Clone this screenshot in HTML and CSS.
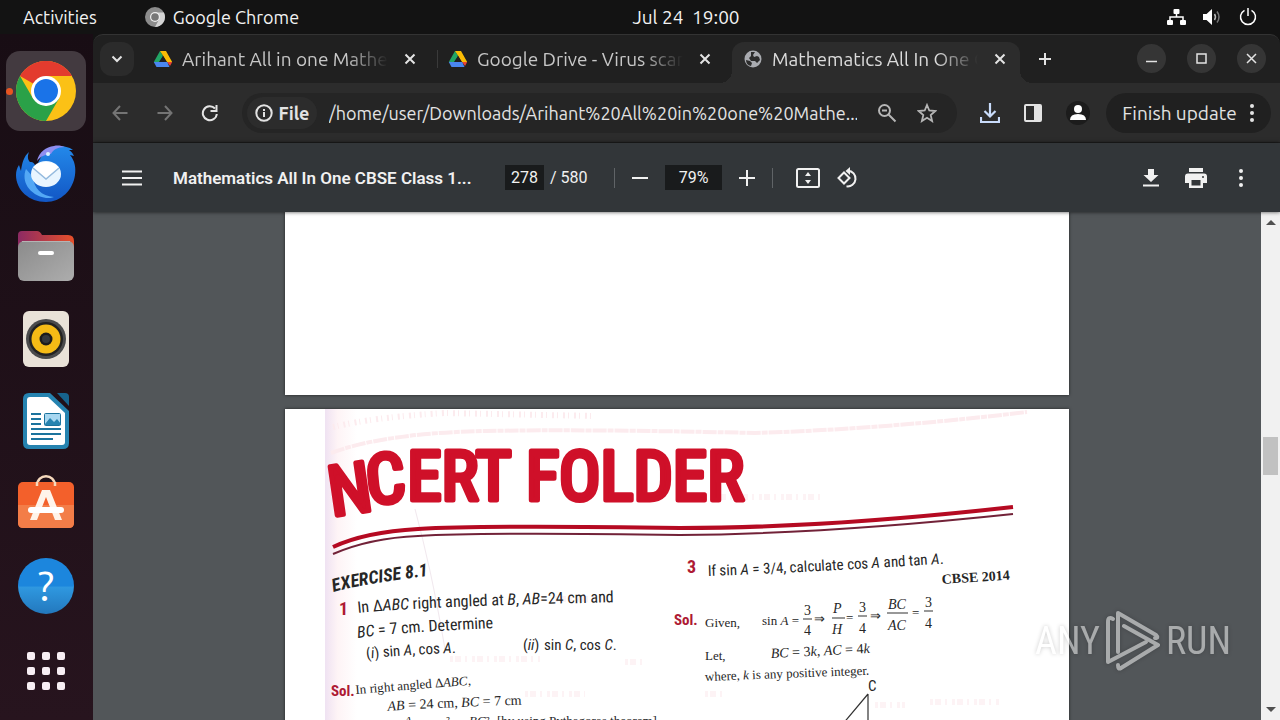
FILE: index.html
```html
<!DOCTYPE html>
<html lang="en">
<head>
    <meta charset="UTF-8">
    <meta name="viewport" content="width=device-width, initial-scale=1.0">
    <title>Mathematics All In One CBSE Class 10</title>
    <link rel="stylesheet" href="styles.css">
</head>
<body>
<!-- shared icons -->
<svg class="defs" width="0" height="0" aria-hidden="true">
    <symbol id="close" viewBox="0 0 16 16"><path d="M3.5 3.5l9 9M12.5 3.5l-9 9" fill="none" stroke="currentColor" stroke-width="2"/></symbol>
    <symbol id="drive" viewBox="0 0 20 18">
        <path d="M7 1h6l-3 5z" fill="#0b8043"/>
        <path d="M7 1l3 5-4 6H.8z" fill="#22a565"/>
        <path d="M7 1h6l6.200 11H14L10 5.500z" fill="#fbbc05"/>
        <path d="M14 12h5.200L17 16l-3-4z" fill="#ea4335"/>
        <path d="M3.500 17L.8 12h13.400l2.300 5z" fill="#4a86f0"/>
        <path d="M10 6l3.500 6h-7z" fill="#202020"/>
    </symbol>
    <symbol id="dots" viewBox="0 0 6 20"><g fill="currentColor"><circle cx="3" cy="3" r="2"/><circle cx="3" cy="10" r="2"/><circle cx="3" cy="17" r="2"/></g></symbol>
</svg>

<header class="topbar">
    <div class="topbar-left">
        <button type="button">Activities</button>
        <button type="button" class="app-menu">
            <svg width="20" height="20" viewBox="0 0 20 20"><circle cx="10" cy="10" r="10" fill="#8c8c8c"/><path d="M10 5.500h8.900A10 10 0 0 1 10 20l4-7.500z" fill="#d4d4d4"/><circle cx="10" cy="10" r="5" fill="#eee"/><circle cx="10" cy="10" r="3.800" fill="#777"/></svg>
            Google Chrome
        </button>
    </div>
    <button type="button" class="clock">Jul 24&nbsp; 19:00</button>
    <div class="tray">
        <svg width="19" height="18" viewBox="0 0 19 18"><g fill="#fff"><rect x="6.500" y="1" width="6" height="5" rx="1"/><rect x="0" y="12" width="6" height="5" rx="1"/><rect x="13" y="12" width="6" height="5" rx="1"/></g><path d="M9.500 5v4M3 12V9h13v3" fill="none" stroke="#fff" stroke-width="1.500"/></svg>
        <svg width="19" height="18" viewBox="0 0 19 18"><path d="M0 6h3.500L9 1v16l-5.500-5H0z" fill="#fff"/><path d="M11.500 6q2 3 0 6" fill="none" stroke="#bbb" stroke-width="1.500"/><path d="M14 3.500q4 5.500 0 11" fill="none" stroke="#777" stroke-width="1.500"/></svg>
        <svg width="18" height="18" viewBox="0 0 18 18"><path d="M5.500 2.300a7.500 7.500 0 1 0 7 0M9 0v8" fill="none" stroke="#fff" stroke-width="1.500"/></svg>
    </div>
</header>

<div class="desktop">
    <nav class="dock" aria-label="Dock">
        <div class="dock-apps">
            <button type="button" class="running" aria-label="Google Chrome">
                <svg width="60" height="60" viewBox="0 0 60 60"><circle cx="30" cy="30" r="30" fill="#fbc116"/><path d="M30 30L4 15a30 30 0 0 1 52 0H30z" fill="#e33b2e"/><path d="M4 15a30 30 0 0 0 26 45l13-22.500-13 7.500-13-7.500z" fill="#2aa148"/><path d="M30 15h26L43 37.500z" fill="#fbc116"/><circle cx="30" cy="30" r="15" fill="#fff"/><circle cx="30" cy="30" r="12" fill="#1a73e8"/></svg>
            </button>
            <button type="button" aria-label="Thunderbird">
                <svg width="60" height="60" viewBox="0 0 60 60"><defs><linearGradient id="bird" x1="0" y1="0" x2="0" y2="1"><stop offset="0" stop-color="#2389ea"/><stop offset="1" stop-color="#1256c4"/></linearGradient></defs>
                    <path d="M13 8c-2 5-1 8 1 10 5-1 6 5 6 9 2-14 11-24 23-25 5 0 10 1 14 4l-4 0c3 2 4 4 5 6l-4-1c5 6 6 13 5 20-2 15-14 27-29 27C13 58 0 46 0 31c0-4 1-7 3-10l2 6C6 19 8 12 13 8z" fill="url(#bird)"/>
                    <path d="M10 25c-5 12 3 26 20 29 3 0 6 0 8-1-13-1-20-9-21-20z" fill="#53a8f5"/><path d="M21 17C23 8 30 3 38 2c4-1 8 0 11 1-8 0-12 3-14 7-5 0-10 2-14 7z" fill="#8e8ef0"/><circle cx="32" cy="10" r="2" fill="#d9f1ff"/>
                    <ellipse cx="30" cy="30" rx="15" ry="13" fill="#e8f5ff"/><path d="M17 24l13 11 13-11c-5-8-21-8-26 0z" fill="#fff"/><path d="M17 24l13 11 13-11" fill="none" stroke="#94bade" stroke-width="1.500"/></svg>
            </button>
            <button type="button" aria-label="Files">
                <svg width="56" height="52" viewBox="0 0 56 52"><defs><linearGradient id="tab"><stop offset="0" stop-color="#8c2a63"/><stop offset="1" stop-color="#e8502a"/></linearGradient><linearGradient id="box" x1="0" y1="0" x2="1" y2="1"><stop offset="0" stop-color="#8b8b8b"/><stop offset="1" stop-color="#adadad"/></linearGradient></defs><path d="M0 20V5q0-4 4-4h15q3 0 5 4h26q6 0 6 6v12H0z" fill="url(#tab)"/><rect y="11" width="56" height="40" rx="6" fill="url(#box)"/><path d="M4 11.500h48" stroke="#b4b4b4"/><rect x="20" y="21" width="16" height="4" rx="2" fill="#fff"/></svg>
            </button>
            <button type="button" aria-label="Rhythmbox">
                <svg width="46" height="56" viewBox="0 0 46 56"><rect width="46" height="56" rx="6" fill="#e9e2d8"/><circle cx="23" cy="28" r="20" fill="#4a4b4c"/><circle cx="23" cy="28" r="17" fill="#222"/><circle cx="23" cy="28" r="14.500" fill="#f5bb16"/><circle cx="23" cy="28" r="6.500" fill="#1c1c1c"/><circle cx="23" cy="28" r="4" fill="#34383d"/></svg>
            </button>
            <button type="button" aria-label="LibreOffice Writer">
                <svg width="46" height="56" viewBox="0 0 46 56"><path d="M6 0h21l19 18v32q0 6-6 6H6q-6 0-6-6V6q0-6 6-6z" fill="#2583b0"/><path d="M34 0h8q4 0 4 4v9z" fill="#17638d"/><path d="M7 4h18l17 16v29q0 3-3 3H7q-3 0-3-3V7q0-3 3-3z" fill="#fff"/><path d="M8 21h10M8 26h10M8 31h10M8 36h30M8 41h30M8 46h22" stroke="#1b739d" stroke-width="2"/><rect x="21.500" y="20.500" width="16" height="12" rx="1" fill="#a8d7f0" stroke="#1b739d"/><path d="M22 31l5-6 4 4 3-3 4 5v1H22z" fill="#2583b0"/></svg>
            </button>
            <button type="button" aria-label="Ubuntu Software">
                <svg width="56" height="60" viewBox="0 0 56 60"><path d="M19 12c0-13 18-13 18 0" fill="none" stroke="#f6d9bd" stroke-width="2.500"/><rect y="8" width="56" height="46" rx="5" fill="#f3602b"/><path d="M0 31h56v18q0 5-5 5H5q-5 0-5-5z" fill="#f37d48"/><path d="M19 12V8M37 12V8" stroke="#f6d9bd" stroke-width="2.500"/><path d="M24 16h8l12 30h-7l-9-23-9 23h-7z" fill="#fff4ea"/><rect x="10" y="33" width="36" height="6" rx="3" fill="#fff"/></svg>
            </button>
            <button type="button" class="help" aria-label="Help"><span>?</span></button>
        </div>
        <button type="button" aria-label="Show Applications">
            <svg width="38" height="38" viewBox="0 0 38 38" fill="#f7eef3"><rect width="8" height="8" rx="2"/><rect x="15" width="8" height="8" rx="2"/><rect x="30" width="8" height="8" rx="2"/><rect y="15" width="8" height="8" rx="2"/><rect x="15" y="15" width="8" height="8" rx="2"/><rect x="30" y="15" width="8" height="8" rx="2"/><rect y="30" width="8" height="8" rx="2"/><rect x="15" y="30" width="8" height="8" rx="2"/><rect x="30" y="30" width="8" height="8" rx="2"/></svg>
        </button>
    </nav>

    <main class="window">
        <div class="tabstrip">
            <button type="button" class="tab-search" aria-label="Search tabs"><svg width="14" height="14" viewBox="0 0 14 14"><path d="M2.500 4.500L7 9l4.500-4.500" fill="none" stroke="currentColor" stroke-width="2"/></svg></button>
            <div class="tab">
                <svg width="20" height="18"><use href="#drive"/></svg>
                <span class="tab-title">Arihant All in one Mathe</span>
                <button type="button" aria-label="Close tab"><svg width="16" height="16"><use href="#close"/></svg></button>
            </div>
            <div class="tab divided">
                <svg width="20" height="18"><use href="#drive"/></svg>
                <span class="tab-title">Google Drive - Virus scan</span>
                <button type="button" aria-label="Close tab"><svg width="16" height="16"><use href="#close"/></svg></button>
            </div>
            <div class="tab active">
                <svg width="20" height="18" viewBox="0 0 20 18"><circle cx="10" cy="9" r="8.500" fill="#a9abb0"/><path d="M3 10l4 1 2 2-1 3q-5-1-5-6zM8 2l4 0-2 3 1 2 3-1 2 1 1 3-3 3-2-2-4 0-2-3 2-2z" fill="#2c2c2c"/></svg>
                <span class="tab-title">Mathematics All In One C</span>
                <button type="button" aria-label="Close tab"><svg width="16" height="16"><use href="#close"/></svg></button>
            </div>
            <button type="button" class="new-tab" aria-label="New tab"><svg width="14" height="14" viewBox="0 0 14 14"><path d="M7 1v12M1 7h12" stroke="currentColor" stroke-width="2"/></svg></button>
            <div class="window-buttons">
                <button type="button" aria-label="Minimize"><svg width="11" height="11" viewBox="0 0 11 11"><path d="M0 8.500h11" stroke="currentColor" stroke-width="1.500"/></svg></button>
                <button type="button" aria-label="Maximize"><svg width="11" height="11" viewBox="0 0 11 11"><rect x="1" y="1" width="9" height="9" fill="none" stroke="currentColor" stroke-width="1.500"/></svg></button>
                <button type="button" aria-label="Close"><svg width="11" height="11" viewBox="0 0 11 11"><path d="M1 1l9 9M10 1l-9 9" stroke="currentColor" stroke-width="1.500"/></svg></button>
            </div>
        </div>

        <div class="toolbar">
            <button type="button" class="nav-btn dim" aria-label="Back"><svg width="16" height="16" viewBox="0 0 16 16"><path d="M15.500 8H2M8 1L1.500 8 8 15" fill="none" stroke="currentColor" stroke-width="2"/></svg></button>
            <button type="button" class="nav-btn dim" aria-label="Forward"><svg width="16" height="16" viewBox="0 0 16 16"><path d="M.5 8H14M8 1l6.500 7L8 15" fill="none" stroke="currentColor" stroke-width="2"/></svg></button>
            <button type="button" class="nav-btn" aria-label="Reload"><svg width="18" height="18" viewBox="0 0 18 18"><path d="M14 4.500A7 7 0 1 0 15.800 10" fill="none" stroke="currentColor" stroke-width="2"/><path d="M16.500 1v7h-7V6h5V1z" fill="currentColor"/></svg></button>
            <div class="omnibox">
                <button type="button" class="chip">
                    <svg width="18" height="18" viewBox="0 0 18 18"><circle cx="9" cy="9" r="7.700" fill="none" stroke="currentColor" stroke-width="2"/><path d="M9 8v5M9 5v2" stroke="currentColor" stroke-width="2"/></svg>
                    File
                </button>
                <input type="text" aria-label="Address" value="/home/user/Downloads/Arihant%20All%20in%20one%20Mathe...">
                <button type="button" aria-label="Zoom"><svg width="20" height="20" viewBox="0 0 20 20"><g fill="none" stroke="currentColor" stroke-width="2"><circle cx="7.500" cy="7.500" r="5.500"/><path d="M11.500 11.500l7 7M5 7.500h5"/></g></svg></button>
                <button type="button" aria-label="Bookmark this tab"><svg width="20" height="20" viewBox="0 0 20 20"><path d="M10 2l2.300 5.500 6 .5-4.600 4 1.400 6L10 14.800 4.900 18l1.400-6-4.600-4 6-.5z" fill="none" stroke="currentColor" stroke-width="1.800"/></svg></button>
            </div>
            <div class="actions">
                <button type="button" class="downloads" aria-label="Downloads"><svg width="20" height="20" viewBox="0 0 20 20"><path d="M10 0v13M4.500 8l5.500 5.500L15.500 8M1 14v5h18v-5" fill="none" stroke="currentColor" stroke-width="2.200"/></svg></button>
                <button type="button" aria-label="Side panel"><svg width="18" height="18" viewBox="0 0 18 18"><rect x="1" y="1" width="16" height="16" rx="1" fill="none" stroke="currentColor" stroke-width="2"/><path d="M10 1h7v16h-7z" fill="currentColor"/></svg></button>
                <button type="button" class="profile" aria-label="Profile"><svg width="16" height="16" viewBox="0 0 16 16" fill="#fff"><circle cx="8" cy="4" r="4"/><path d="M0 15q0-6 8-6t8 6z"/></svg></button>
            </div>
            <button type="button" class="update">Finish update <svg width="6" height="20"><use href="#dots"/></svg></button>
        </div>

        <section class="pdf">
            <div class="pdf-bar">
                <button type="button" aria-label="Menu"><svg width="20" height="16" viewBox="0 0 20 16"><path d="M0 1.500h20M0 8h20M0 14.500h20" stroke="currentColor" stroke-width="2"/></svg></button>
                <h1>Mathematics All In One CBSE Class 1...</h1>
                <input class="page-no" type="text" aria-label="Page number" value="278">
                <span class="total">/ 580</span>
                <span class="sep"></span>
                <button type="button" aria-label="Zoom out"><svg width="16" height="16" viewBox="0 0 16 16"><path d="M0 8h16" stroke="currentColor" stroke-width="2"/></svg></button>
                <input class="zoom" type="text" aria-label="Zoom level" value="79%">
                <button type="button" aria-label="Zoom in"><svg width="16" height="16" viewBox="0 0 16 16"><path d="M0 8h16M8 0v16" stroke="currentColor" stroke-width="2"/></svg></button>
                <span class="sep"></span>
                <div class="view-buttons">
                    <button type="button" aria-label="Fit to page"><svg width="24" height="20" viewBox="0 0 24 20"><rect x="1" y="1" width="22" height="18" rx="1.500" fill="none" stroke="currentColor" stroke-width="2"/><path d="M12 4l3 4H9zM12 16l3-4H9z" fill="currentColor"/></svg></button>
                    <button type="button" aria-label="Rotate"><svg width="22" height="22" viewBox="0 0 22 22"><path d="M7 5.500L12.500 11 7 16.500 1.500 11z" fill="none" stroke="currentColor" stroke-width="2"/><path d="M11 3.800a7.800 7.800 0 1 1-1.500 15.500" fill="none" stroke="currentColor" stroke-width="2"/><path d="M13 0v8L8.500 4z" fill="currentColor"/></svg></button>
                </div>
                <div class="file-buttons">
                    <button type="button" aria-label="Download"><svg width="16" height="18" viewBox="0 0 16 18"><path d="M5 0h6v6h4.500L8 13 .5 6H5zM0 15.500h16v2H0z" fill="currentColor"/></svg></button>
                    <button type="button" aria-label="Print"><svg width="22" height="20" viewBox="0 0 22 20"><path d="M4 0h14v4H4zM3 5.500h16q3 0 3 3V15h-4v5H4v-5H0V8.500q0-3 3-3z" fill="currentColor"/><path d="M6.500 12h9v5.500h-9z" fill="#323639"/><circle cx="18" cy="9" r="1" fill="#323639"/></svg></button>
                    <button type="button" aria-label="More actions"><svg width="6" height="20"><use href="#dots"/></svg></button>
                </div>
            </div>

            <div class="viewer">
                <div class="pages">
                    <div class="sheet blank"></div>
                    <div class="sheet">
                        <!-- scanned book page, lines bend towards the spine -->
                        <svg class="scan" viewBox="0 0 784 1010" role="img" aria-label="NCERT Folder, Exercise 8.1">
                            <defs>
                                <linearGradient id="spine"><stop offset="0" stop-color="#efe2f2"/><stop offset=".4" stop-color="#fef4f6"/><stop offset="1" stop-color="#fff"/></linearGradient>
                                <path id="l-title" d="M47 107L88 101V95L130 91L560 91"/>
                                <path id="l-ex" d="M49 183Q80 173 220 158"/>
                                <path id="l-1" d="M73 204Q150 196 400 192"/>
                                <path id="l-2" d="M73 229Q140 219 400 213"/>
                                <path id="l-3" d="M82 250Q120 244 300 240"/>
                                <path id="l-4" d="M71 285Q130 280 300 267"/>
                                <path id="l-5" d="M103 302Q160 297 400 291"/>
                                <path id="r-1" d="M423 167Q540 163 760 148"/>
                                <path id="r-2" d="M657 175L780 167"/>
                                <path id="r-3" d="M486 249L680 239"/>
                                <path id="r-4" d="M420 272L680 262"/>
                            </defs>
                            <rect x="40" width="32" height="1010" fill="url(#spine)"/>
                            <g fill="none" stroke="#fcebee">
                                <path d="M46 44Q100 24 200 22T470 24Q600 20 742 3" stroke-width="4" stroke-dasharray="14 1 6 1"/>
                                <path d="M48 18Q90 8 160 4L310 7" stroke-width="6" stroke-dasharray="2 3 1 5"/>
                                <path d="M130 100Q138 130 145 162T160 240" stroke="#f1e8ee"/>
                                <path d="M165 250h90M270 190h50M340 253h20M240 285h60M420 285h18M590 296h30M645 293h70M430 88h110" stroke-width="6" stroke-dasharray="3 2 6 4 2 5" stroke="#fdf3f5"/>
                            </g>
                            <g fill="none">
                                <path d="M48 138Q80 123 133 120Q200 116 395 119Q540 119 728 98" stroke="#b50a22" stroke-width="4"/>
                                <path d="M48 145Q85 129 133 127Q200 123 395 126Q540 125 728 105" stroke="#722238" stroke-width="2"/>
                            </g>
                            <text class="title"><textPath href="#l-title">NCERT FOLDER</textPath></text>
                            <g class="sans">
                                <text class="exercise"><textPath href="#l-ex">EXERCISE 8.1</textPath></text>
                                <text class="num" x="54" y="206">1</text>
                                <text class="question"><textPath href="#l-1">In ∆<tspan class="i">ABC</tspan> right angled at <tspan class="i">B</tspan>, <tspan class="i">AB</tspan>=24 cm and</textPath></text>
                                <text class="question"><textPath href="#l-2"><tspan class="i">BC</tspan> = 7 cm. Determine</textPath></text>
                                <text><textPath href="#l-3">(<tspan class="i">i</tspan>) sin <tspan class="i">A</tspan>, cos <tspan class="i">A</tspan>.</textPath></text>
                                <text x="238" y="241">(<tspan class="i">ii</tspan>)</text>
                                <text x="259" y="241">sin <tspan class="i">C</tspan>, cos <tspan class="i">C</tspan>.</text>
                                <text class="num sol" x="46" y="287">Sol.</text>
                                <text class="num" x="402" y="164">3</text>
                                <text><textPath href="#r-1">If sin <tspan class="i">A</tspan> = 3/4, calculate cos <tspan class="i">A</tspan> and tan <tspan class="i">A</tspan>.</textPath></text>
                                <text class="num sol" x="389" y="216">Sol.</text>
                                <text x="583" y="282">C</text>
                            </g>
                            <g class="serif">
                                <text><textPath href="#l-4">In right angled ∆<tspan class="i">ABC</tspan>,</textPath></text>
                                <text class="eq"><textPath href="#l-5"><tspan class="i">AB</tspan> = 24 cm, <tspan class="i">BC</tspan> = 7 cm</textPath></text>
                                <text y="316"><tspan class="i" x="119">A</tspan><tspan x="161">²</tspan><tspan class="i" x="184">BC</tspan>²<tspan x="212">[by using Pythagoras theorem]</tspan></text>
                                <text class="eq b"><textPath href="#r-2">CBSE 2014</textPath></text>
                                <text x="420" y="218">Given,</text>
                                <text x="477" y="216">sin <tspan class="i">A</tspan> =</text>
                                <text class="eq" x="519" y="206">3</text><text class="eq" x="519" y="226">4</text>
                                <text x="529" y="214">⇒</text>
                                <text class="eq i" x="548" y="204">P</text><text class="eq i" x="547" y="225">H</text>
                                <text x="561" y="213">=</text>
                                <text class="eq" x="574" y="203">3</text><text class="eq" x="574" y="224">4</text>
                                <text x="585" y="211">⇒</text>
                                <text class="eq i" x="603" y="200">BC</text><text class="eq i" x="603" y="221">AC</text>
                                <text x="627" y="208">=</text>
                                <text class="eq" x="640" y="198">3</text><text class="eq" x="640" y="219">4</text>
                                <text x="420" y="251">Let,</text>
                                <text class="eq"><textPath href="#r-3"><tspan class="i">BC</tspan> = 3<tspan class="i">k</tspan>, <tspan class="i">AC</tspan> = 4<tspan class="i">k</tspan></textPath></text>
                                <text><textPath href="#r-4">where, <tspan class="i">k</tspan> is any positive integer.</textPath></text>
                            </g>
                            <path d="M518 210h9M547 209h13M573 207h9M602 204h21M639 202h9M583 285V360M583 285L520 360" fill="none" stroke="#333" stroke-width="1.200"/>
                        </svg>
                    </div>
                </div>
                <div class="scrollbar" aria-hidden="true">
                    <i class="up"></i>
                    <div class="thumb"></div>
                    <i class="down"></i>
                </div>
            </div>
        </section>
    </main>
</div>

<div class="watermark">
    <span>ANY</span>
    <svg width="54" height="62" viewBox="0 0 54 62"><g fill="none" stroke="currentColor" stroke-width="4" stroke-linejoin="round" stroke-linecap="round"><path d="M7 9Q2 6 2 12V52L40 32"/><path d="M12 42V3L50 25Q53 28 49 28"/><path d="M18 16L52 35L15 58Q12 60 12 55"/></g></svg>
    <span>RUN</span>
</div>
</body>
</html>
```

FILE: styles.css
```css
* {
    box-sizing: border-box;
}

body {
    margin: 0;
    height: 100vh;
    display: flex;
    flex-direction: column;
    overflow: hidden;
    background: #131313;
    color: #e3e3e3;
    font-family: "Ubuntu", "Noto Sans", "Open Sans", sans-serif;
    font-size: 18px;
}

button {
    display: flex;
    align-items: center;
    justify-content: center;
    padding: 0;
    border: none;
    background: none;
    color: inherit;
    font: inherit;
    white-space: nowrap;
}

input {
    border: none;
    color: inherit;
    font: inherit;
}

svg {
    display: block;
    flex: none;
}

.defs {
    position: absolute;
}

/* top bar */
.topbar {
    display: grid;
    grid-template-columns: 1fr auto 1fr;
    align-items: center;
    height: 34px;
    flex: none;
    padding: 0 23px 0 115px;
    color: #f2f2f2;
}

.topbar-left {
    display: flex;
    gap: 48px;
    margin-left: -92px;
}

.app-menu {
    gap: 8px;
}

.clock {
    font-size: 19px;
}

.tray {
    display: flex;
    justify-content: flex-end;
    gap: 17px;
}

/* dock */
.desktop {
    flex: 1;
    display: flex;
    min-height: 0;
}

.dock {
    width: 93px;
    flex: none;
    display: flex;
    flex-direction: column;
    gap: 5px;
    padding: 17px 6px 9px;
    background: linear-gradient(#180d14, #27141e);
}

.dock-apps {
    flex: 1;
    display: flex;
    flex-direction: column;
    justify-content: space-between;
}

.dock button {
    width: 80px;
    height: 80px;
    border-radius: 14px;
}

.dock .running {
    position: relative;
    background: #433a40;
}

.running::before {
    content: "";
    position: absolute;
    left: 0;
    width: 7px;
    height: 7px;
    border-radius: 50%;
    background: #e95420;
}

.help span {
    width: 56px;
    height: 56px;
    border-radius: 50%;
    background: linear-gradient(#1c86dd 50%, #2f98e0 52%, #2378bd);
    color: #fff;
    font-size: 42px;
    line-height: 56px;
}

/* browser window */
.window {
    flex: 1;
    min-width: 0;
    display: flex;
    flex-direction: column;
    background: #202020;
    border-top: 1px solid #333;
    border-radius: 10px 10px 0 0;
    overflow: hidden;
}

.tabstrip {
    display: flex;
    height: 48px;
    flex: none;
    padding: 7px 14px 0 7px;
}

.tab-search {
    width: 34px;
    height: 34px;
    margin-right: 8px;
    border-radius: 12px;
    background: #2b2b2b;
}

.tab {
    display: flex;
    align-items: center;
    gap: 9px;
    width: 295px;
    height: 34px;
    padding: 0 19px 0 11px;
}

.tab-title {
    flex: 1;
    overflow: hidden;
    white-space: nowrap;
    font-size: 19px;
    color: #c7c7c7;
    -webkit-mask-image: linear-gradient(90deg, #000 80%, transparent);
    mask-image: linear-gradient(90deg, #000 80%, transparent);
}

.tab button {
    margin-left: 5px;
}

.divided {
    background: linear-gradient(#3a3a3a, #3a3a3a) 0 50% / 1px 18px no-repeat;
}

.tab.active {
    position: relative;
    width: 288px;
    height: 41px;
    padding: 0 12px 7px 11px;
    border-radius: 12px 12px 0 0;
    background: #2c2c2c;
}

.tab.active::before,
.tab.active::after {
    content: "";
    position: absolute;
    bottom: 0;
    left: -12px;
    width: 12px;
    height: 12px;
    background: radial-gradient(circle at 0 0, transparent 12px, #2c2c2c 12px);
}

.tab.active::after {
    left: 100%;
    background: radial-gradient(circle at 100% 0, transparent 12px, #2c2c2c 12px);
}

.active .tab-title {
    color: #dcdcdc;
}

.new-tab {
    width: 34px;
    height: 34px;
    margin-left: 8px;
}

.window-buttons {
    display: flex;
    gap: 21px;
    margin-left: auto;
    padding-top: 2px;
}

.window-buttons button {
    width: 29px;
    height: 29px;
    border-radius: 50%;
    background: #353535;
}

.toolbar {
    display: flex;
    align-items: center;
    height: 60px;
    flex: none;
    padding: 0 9px 0 12px;
    background: #2c2c2c;
    border-bottom: 1px solid #202020;
}

.nav-btn {
    width: 30px;
    height: 30px;
    margin-right: 15px;
}

.dim {
    color: #747474;
}

.omnibox {
    flex: 1;
    display: flex;
    align-items: center;
    min-width: 0;
    height: 40px;
    margin-left: 2px;
    padding: 0 20px 0 5px;
    border-radius: 20px;
    background: #252525;
}

.omnibox > button:not(.chip) {
    margin-left: 20px;
    color: #b5b5b5;
}

.chip {
    gap: 6px;
    width: 70px;
    height: 32px;
    border-radius: 16px;
    background: #2c2c2c;
    font-weight: bold;
}

.omnibox input {
    flex: 1;
    min-width: 0;
    margin-left: 12px;
    padding: 0;
    background: none;
}

.actions {
    display: flex;
    align-items: center;
    gap: 24px;
    margin: 0 16px 0 23px;
}

.downloads {
    color: #c9dcfb;
}

.profile {
    width: 24px;
    height: 24px;
    border-radius: 50%;
    background: #1c1c1c;
}

.update {
    gap: 12px;
    width: 165px;
    height: 40px;
    border-radius: 20px;
    background: #202020;
    font-size: 19px;
}

/* pdf viewer */
.pdf {
    flex: 1;
    min-height: 0;
    display: flex;
    flex-direction: column;
    background: #525659;
}

.pdf-bar {
    position: relative;
    display: flex;
    align-items: center;
    height: 69px;
    flex: none;
    padding: 0 17px 0 29px;
    background: #323639;
    box-shadow: 0 0 4px rgba(0, 0, 0, .7);
    color: #f1f1f1;
    font-family: Roboto, sans-serif;
    font-size: 16px;
}

.pdf-bar h1 {
    width: 303px;
    margin: 0 29px 0 31px;
    font-size: 17px;
    font-weight: 600;
    white-space: nowrap;
}

.pdf-bar input {
    height: 25px;
    padding: 0;
    background: #191b1c;
    text-align: center;
}

.page-no {
    width: 39px;
}

.total {
    width: 40px;
    margin-left: 6px;
}

.sep {
    width: 1px;
    height: 20px;
    margin: 0 17px 0 24px;
    background: #606467;
}

.zoom {
    width: 57px;
    margin: 0 17px;
}

.pdf-bar button + .sep {
    margin: 0 15px 0 17px;
}

.view-buttons,
.file-buttons {
    display: flex;
    align-items: center;
}

.view-buttons button {
    width: 40px;
}

.file-buttons {
    margin-left: auto;
}

.file-buttons button {
    width: 45px;
}

.viewer {
    flex: 1;
    min-height: 0;
    display: flex;
}

.pages {
    flex: 1;
    min-width: 0;
    display: flex;
    flex-direction: column;
    align-items: center;
    gap: 14px;
    overflow: hidden;
}

.sheet {
    width: 784px;
    max-width: 100%;
    flex: none;
    background: #fff;
    box-shadow: 0 0 3px rgba(0, 0, 0, .6);
}

.blank {
    height: 183px;
}

.scan {
    width: 100%;
    height: auto;
}

.scan text {
    fill: #262626;
}

.scan .title {
    font: 69px "Roboto Condensed", Roboto, sans-serif;
    fill: #cf1029;
    stroke: #cf1029;
    stroke-width: 5;
    stroke-linejoin: round;
}

.sans {
    font: 15px "Roboto Condensed", "Liberation Sans", sans-serif;
}

.question {
    font-size: 16px;
}

.serif {
    font: 13px "Liberation Serif", serif;
}

.eq {
    font-size: 14px;
}

.scan .exercise {
    font-size: 18px;
    font-style: italic;
    font-weight: bold;
}

.scan .num {
    font-size: 18px;
    font-weight: bold;
    fill: #ae1a34;
}

.scan .sol {
    font-size: 15px;
}

.i {
    font-style: italic;
}

.b {
    font-weight: bold;
}

.scrollbar {
    width: 19px;
    display: flex;
    flex-direction: column;
    align-items: center;
    padding: 8px 2px;
    background: #f1f1f1;
}

.thumb {
    width: 15px;
    height: 38px;
    margin: 212px 0 auto;
    background: #c1c1c1;
}

.up,
.down {
    border: 5px solid transparent;
    border-top: none;
    border-bottom: 5px solid #505050;
}

.down {
    border-bottom: none;
    border-top: 5px solid #505050;
}

.watermark {
    position: absolute;
    right: 49px;
    bottom: 48px;
    display: flex;
    align-items: center;
    gap: 6px;
    color: #fff;
    opacity: .5;
    font: 38px "Roboto Condensed", Roboto, sans-serif;
    filter: drop-shadow(0 0 2px rgba(0, 0, 0, .4));
}
```
